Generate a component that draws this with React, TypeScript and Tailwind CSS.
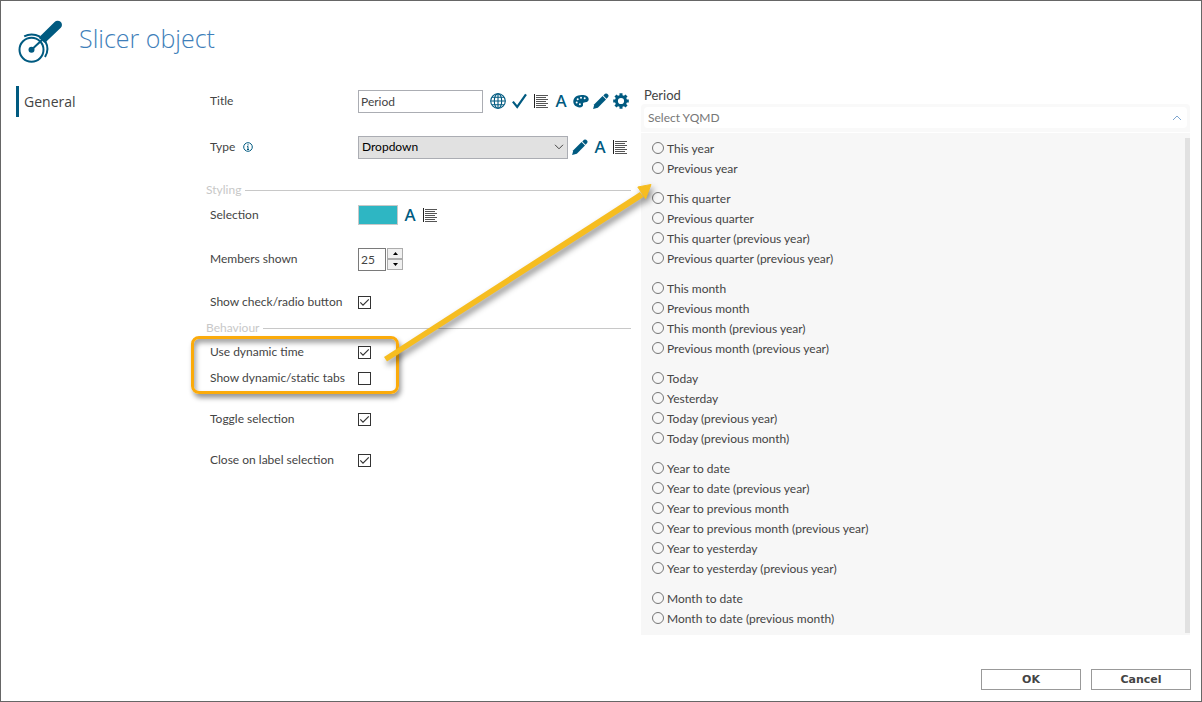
import { useState } from 'react';
import type { ReactNode } from 'react';

const PERIOD_GROUPS = [
  ['This year', 'Previous year'],
  ['This quarter', 'Previous quarter', 'This quarter (previous year)', 'Previous quarter (previous year)'],
  ['This month', 'Previous month', 'This month (previous year)', 'Previous month (previous year)'],
  ['Today', 'Yesterday', 'Today (previous year)', 'Today (previous month)'],
  [
    'Year to date',
    'Year to date (previous year)',
    'Year to previous month',
    'Year to previous month (previous year)',
    'Year to yesterday',
    'Year to yesterday (previous year)',
  ],
  ['Month to date', 'Month to date (previous month)'],
];

const SlicerLogo = () => (
  <svg viewBox="0 0 44 44" className="h-11 w-11" fill="none" stroke="#005a80" aria-hidden="true">
    <circle cx="13.5" cy="29.8" r="12" strokeWidth="2" />
    <circle cx="13.5" cy="29.8" r="3" fill="#005a80" stroke="none" />
    <path d="M13.5 29.8 L24 20" strokeWidth="2" />
    <path d="M6.2 16.4 Q13.5 12.4 22 16.6" strokeWidth="2" />
    <path d="M27.4 21.5 Q31.8 29.5 27 37" strokeWidth="2" />
    <path
      d="M20.6 17.8 L36.6 2 A4.1 4.1 0 0 1 42.8 7.8 L26.8 23 Z"
      fill="#005a80"
      stroke="none"
    />
  </svg>
);

const GlobeIcon = () => (
  <svg viewBox="0 0 16 16" className="h-4 w-4" fill="none" stroke="#005a80" strokeWidth="1.1">
    <circle cx="8" cy="8" r="7.3" />
    <ellipse cx="8" cy="8" rx="3.7" ry="7.3" />
    <path d="M8 0.7 V15.3 M0.7 8 H15.3 M2 4.3 H14 M2 11.7 H14" />
  </svg>
);

const TickIcon = () => (
  <svg viewBox="0 0 16 16" className="h-4 w-4" fill="none" stroke="#005a80" strokeWidth="2.2">
    <path d="M0.9 8.6 L5.2 14 L14 1.4" />
  </svg>
);

const LinesIcon = () => (
  <svg viewBox="0 0 16 16" className="h-4 w-4" stroke="#555" shapeRendering="crispEdges">
    <path d="M1.5 1 V15" stroke="#222" />
    <path d="M3 2.5 H15 M3 4.5 H13 M3 6.5 H15 M3 8.5 H13 M3 10.5 H15 M3 12.5 H13 M3 14.5 H15" />
  </svg>
);

const PaletteIcon = () => (
  <svg viewBox="0 0 16 16" className="h-4 w-4">
    <path
      d="M9 2 C4 1.8 0.3 4.6 0.3 8.6 C0.3 12 3 14.4 6.6 14.4 C9 14.4 10.4 13 10 11.4 C9.7 10 10.6 9.2 12.2 9.2 C14.6 9.2 15.9 8 15.7 6 C15.4 3.4 12.8 2.1 9 2 Z"
      fill="#005a80"
    />
    <circle cx="3.7" cy="9.6" r="1" fill="#fff" />
    <circle cx="4.7" cy="6.3" r="1" fill="#fff" />
    <circle cx="8" cy="4.8" r="1" fill="#fff" />
    <circle cx="11.7" cy="5.2" r="1" fill="#fff" />
    <circle cx="6.9" cy="11.3" r="1" fill="#fff" />
  </svg>
);

const PencilIcon = () => (
  <svg viewBox="0 0 16 16" className="h-4 w-4" fill="#005a80">
    <path d="M0.1 15.9 L1.3 11.2 L9.6 3 L13 6.4 L4.8 14.7 Z" />
    <path d="M10.3 2.4 L12 0.8 Q13 0 14.2 0.8 L15.2 1.8 Q16 2.8 15.2 4 L13.6 5.7 Z" />
  </svg>
);

const GearIcon = () => (
  <svg viewBox="0 0 16 16" className="h-4 w-4" fill="none" stroke="#005a80">
    <circle cx="8" cy="8" r="4.6" strokeWidth="3" />
    <path
      d="M8 0.2 V3 M8 13 V15.8 M0.2 8 H3 M13 8 H15.8 M2.5 2.5 L4.4 4.4 M11.6 11.6 L13.5 13.5 M2.5 13.5 L4.4 11.6 M11.6 4.4 L13.5 2.5"
      strokeWidth="3"
    />
  </svg>
);

const IconButton = ({ label, wide, children }: { label: string; wide?: boolean; children: ReactNode }) => (
  <button
    type="button"
    aria-label={label}
    className={`flex h-5 items-center justify-center ${wide ? 'w-[22px]' : 'w-5'}`}
  >
    {children}
  </button>
);

const FontButton = () => (
  <IconButton label="Font">
    <span className="font-['Noto_Sans',sans-serif] text-[17px] leading-5 font-medium text-[#005a80]">A</span>
  </IconButton>
);

const AlignButton = () => (
  <IconButton label="Alignment">
    <LinesIcon />
  </IconButton>
);

const EditButton = () => (
  <IconButton label="Edit">
    <PencilIcon />
  </IconButton>
);

interface RowProps {
  id: string;
  label: string;
  height: string;
  info?: boolean;
  children: ReactNode;
}

const Row = ({ id, label, height, info, children }: RowProps) => (
  <div className={`flex items-center pl-1 ${height}`}>
    <div className="flex w-37 shrink-0 items-center gap-2">
      <label htmlFor={id} className="whitespace-nowrap">
        {label}
      </label>
      {info && (
        <svg viewBox="0 0 10 10" className="h-2.5 w-2.5" fill="none" stroke="#005a80" aria-hidden="true">
          <circle cx="5" cy="5" r="4.3" />
          <path d="M5 4.4 V7.8 M5 2.2 V3.5 M4 4.6 H5 M4 7.5 H6" />
        </svg>
      )}
    </div>
    {children}
  </div>
);

interface CheckRowProps {
  id: string;
  label: string;
  height: string;
  defaultChecked?: boolean;
}

const CheckRow = ({ id, label, height, defaultChecked }: CheckRowProps) => (
  <Row id={id} label={label} height={height}>
    <span className="grid">
      <input
        id={id}
        type="checkbox"
        defaultChecked={defaultChecked}
        className="peer col-start-1 row-start-1 h-[13px] w-[13px] appearance-none border border-[#333] bg-white"
      />
      <svg
        viewBox="0 0 13 13"
        className="pointer-events-none invisible col-start-1 row-start-1 h-[13px] w-[13px] peer-checked:visible"
        fill="none"
        stroke="#333"
        strokeWidth="1.2"
      >
        <path d="M2.3 6.4 L5 9.2 L10.8 3.3" />
      </svg>
    </span>
  </Row>
);

const SectionTitle = ({ title, height }: { title: string; height: string }) => (
  <div className={`flex items-center gap-1 ${height}`}>
    <h2 className="text-[12px] text-[#c8c8c8]">{title}</h2>
    <div className="h-px flex-1 bg-[#c8c8c8]" />
  </div>
);

const SettingsForm = () => {
  const [members, setMembers] = useState(25);

  return (
    <form className="w-[425px] shrink-0">
      <Row id="title" label="Title" height="h-[30px]">
        <input
          id="title"
          type="text"
          defaultValue="Period"
          className="h-[23px] w-[125px] border border-[#abadb3] bg-white px-0.5"
        />
        <div className="ml-1 flex items-center">
          <IconButton label="Translate" wide>
            <GlobeIcon />
          </IconButton>
          <IconButton label="Validate" wide>
            <TickIcon />
          </IconButton>
          <AlignButton />
          <FontButton />
          <IconButton label="Palette">
            <PaletteIcon />
          </IconButton>
          <EditButton />
          <IconButton label="Settings">
            <GearIcon />
          </IconButton>
        </div>
      </Row>
      <Row id="type" label="Type" height="h-[62px]" info>
        <div className="grid w-[210px] items-center">
          <select
            id="type"
            className="col-start-1 row-start-1 h-[23px] appearance-none border border-[#abadb3] bg-[#e1e1e1] px-[3px] text-black"
          >
            <option>Dropdown</option>
            <option>List</option>
          </select>
          <svg
            viewBox="0 0 10 6"
            className="pointer-events-none col-start-1 row-start-1 mr-1 h-1.5 w-2.5 justify-self-end"
            fill="none"
            stroke="#444"
          >
            <path d="M1 0.8 L5 4.8 L9 0.8" />
          </svg>
        </div>
        <div className="ml-0.5 flex items-center">
          <EditButton />
          <FontButton />
          <AlignButton />
        </div>
      </Row>

      <SectionTitle title="Styling" height="h-6" />
      <Row id="selection" label="Selection" height="h-[26px]">
        <button
          id="selection"
          type="button"
          className="h-5 w-10 border border-[#c8c8c8] bg-[#2eb6c3]"
        />
        <div className="ml-0.5 flex items-center">
          <FontButton />
          <AlignButton />
        </div>
      </Row>
      <Row id="members" label="Members shown" height="h-[62px]">
        <input
          id="members"
          type="text"
          inputMode="numeric"
          value={members}
          onChange={e => setMembers(Number(e.target.value) || 0)}
          className="h-[23px] w-7 border border-[#7a7a7a] bg-white px-0.5"
        />
        <div className="ml-px flex flex-col">
          <button
            type="button"
            aria-label="Increase"
            onClick={() => setMembers(prev => prev + 1)}
            className="flex h-[11px] w-4 items-center justify-center border border-[#acacac] bg-[#f0f0f0]"
          >
            <svg viewBox="0 0 5 3" className="h-[3px] w-[5px]">
              <path d="M0 3 L2.5 0 L5 3 Z" />
            </svg>
          </button>
          <button
            type="button"
            aria-label="Decrease"
            onClick={() => setMembers(prev => prev - 1)}
            className="flex h-[11px] w-4 items-center justify-center border border-[#acacac] bg-[#f0f0f0]"
          >
            <svg viewBox="0 0 5 3" className="h-[3px] w-[5px]">
              <path d="M0 0 L2.5 3 L5 0 Z" />
            </svg>
          </button>
        </div>
      </Row>
      <CheckRow id="show-check" label="Show check/radio button" height="h-6" defaultChecked />

      <SectionTitle title="Behaviour" height="h-7" />
      <div className="relative">
        <CheckRow id="dynamic-time" label="Use dynamic time" height="h-5" defaultChecked />
        <CheckRow id="dynamic-tabs" label="Show dynamic/static tabs" height="h-8" />
        {/* callout around the dynamic time options, arrow points at the period list */}
        <div className="pointer-events-none absolute -top-1.5 bottom-0 -left-[15px] w-[208px] rounded-lg border-3 border-[#fbab0b] shadow-[2px_4px_5px_rgba(0,0,0,0.4),inset_2px_4px_5px_rgba(0,0,0,0.35)]" />
        <svg
          viewBox="0 0 280 190"
          className="pointer-events-none absolute bottom-7 left-[175px] z-10 h-[190px] w-[280px] overflow-visible drop-shadow-[2px_4px_3px_rgba(0,0,0,0.45)]"
          aria-hidden="true"
        >
          <path d="M3 181 L259 16 L262.5 21 L6 185.5 Z" fill="#f6bd20" />
          <path d="M270 8.5 L256.8 11 L264.6 22.8 Z" fill="#f6bd20" stroke="#f6bd20" />
        </svg>
      </div>
      <CheckRow id="toggle" label="Toggle selection" height="h-[50px]" defaultChecked />
      <CheckRow id="close" label="Close on label selection" height="h-8" defaultChecked />
    </form>
  );
};

const PeriodSlicer = () => {
  const [open, setOpen] = useState(true);

  return (
    <section className="ml-2.5 min-w-0 flex-1">
      <h2 className="pl-[3px] text-[13px] leading-[18px]">Period</h2>
      <div className="rounded-t bg-[#f9f9f9] px-[3px] pt-[3px] pb-1">
        <button
          type="button"
          aria-expanded={open}
          onClick={() => setOpen(!open)}
          className="flex h-[21px] w-full items-center justify-between rounded bg-white pr-[5px] pl-1 text-[#777]"
        >
          Select YQMD
          <svg viewBox="0 0 10 6" className="h-1.5 w-2.5" fill="none" stroke="#7ea6d0">
            <path d="M1 5 L5 1 L9 5" />
          </svg>
        </button>
      </div>
      {open && (
        <div className="mt-px flex justify-between bg-[#f7f7f7] pt-[5px]">
          <div className="flex flex-col gap-2.5 pt-px pb-1.5 pl-[11px]">
            {PERIOD_GROUPS.map(group => (
              <div key={group[0]}>
                {group.map(name => (
                  <label key={name} className="flex h-5 items-center gap-[3px]">
                    <input
                      type="radio"
                      name="period"
                      value={name}
                      className="mb-0.5 h-3 w-3 appearance-none rounded-full border border-[#767676] checked:border-4"
                    />
                    {name}
                  </label>
                ))}
              </div>
            ))}
          </div>
          <div className="mb-0.5 w-[5px] bg-[#e1e1e1]" />
        </div>
      )}
    </section>
  );
};

export default function App() {
  return (
    <div className="flex min-h-screen flex-col border border-[#666] bg-white font-['Lato','Noto_Sans',sans-serif] text-[12px] leading-5 text-[#444]">
      <header className="flex h-[85px] items-start gap-[17px] pt-[19px] pl-[17px]">
        <SlicerLogo />
        <h1 className="font-['Open_Sans',sans-serif] text-[25px] leading-9 font-light text-[#3f7fba]">
          Slicer object
        </h1>
      </header>

      <main className="flex pr-[11px]">
        <nav className="w-[205px] shrink-0 pl-[15px]">
          <a
            href="#general"
            className="block border-l-3 border-[#005a80] pl-[5px] font-['Open_Sans',sans-serif] text-[14px] leading-[31px]"
          >
            General
          </a>
        </nav>
        <SettingsForm />
        <PeriodSlicer />
      </main>

      <footer className="mt-auto flex justify-end gap-2.5 pr-2.5 pb-[11px] font-['DejaVu_Sans',sans-serif] text-[11px] font-bold">
        <button type="button" className="h-[21px] w-[100px] border border-[#999]">
          OK
        </button>
        <button type="button" className="h-[21px] w-[100px] border border-[#999]">
          Cancel
        </button>
      </footer>
    </div>
  );
}
